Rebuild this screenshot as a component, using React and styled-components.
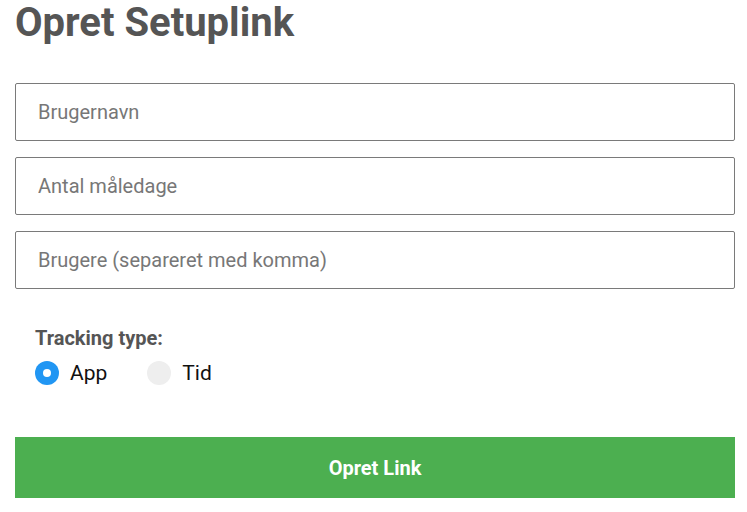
import React from "react";
import styled, { createGlobalStyle } from "styled-components";

const Global = createGlobalStyle`
  html, body { margin: 0; padding: 0; background: #fff; }
  body { font-family: Roboto, "Liberation Sans", Arial, sans-serif; }
  * { box-sizing: border-box; }
`;

const Page = styled.div`
  padding: 0 12px 0 15px;
  display: flex;
  flex-direction: column;
`;

const Title = styled.h1`
  margin: 0;
  font-size: 40px;
  line-height: 46px;
  font-weight: 700;
  color: #555;
`;

const Form = styled.form`
  display: flex;
  flex-direction: column;
  gap: 16px;
  margin-top: 37px;
`;

const Input = styled.input`
  width: 100%;
  height: 58px;
  border: 1px solid #7a7a7a;
  border-radius: 2px;
  padding: 0 22px;
  font-family: Roboto, "Liberation Sans", Arial, sans-serif;
  font-size: 20px;
  color: #333;
  outline: none;
  &::placeholder { color: #777; }
`;

const Fieldset = styled.div`
  display: flex;
  flex-direction: column;
  padding: 37px 20px 0;
  gap: 9px;
`;

const Legend = styled.div`
  font-size: 20px;
  font-weight: 700;
  color: #555;
  line-height: 24px;
`;

const Options = styled.div`
  display: flex;
  align-items: center;
  gap: 40px;
`;

const Option = styled.label`
  display: flex;
  align-items: center;
  gap: 11px;
  font-size: 21px;
  color: #111;
  line-height: 28px;
`;

const Dot = styled.span`
  width: 24px;
  height: 24px;
  border-radius: 50%;
  background: ${(p) => (p.$checked ? "#2196F3" : "#eee")};
  display: flex;
  align-items: center;
  justify-content: center;
  &::after {
    content: "";
    width: 8px;
    height: 8px;
    border-radius: 50%;
    background: #fff;
    display: ${(p) => (p.$checked ? "block" : "none")};
  }
`;

const Button = styled.button`
  margin-top: 50px;
  width: 100%;
  height: 61px;
  border: none;
  background: #4caf50;
  color: #fff;
  font-family: Roboto, "Liberation Sans", Arial, sans-serif;
  font-size: 20px;
  font-weight: 700;
`;

export default function App() {
  return (
    <>
      <Global />
      <Page>
        <Title>Opret Setuplink</Title>
        <Form onSubmit={(e) => e.preventDefault()}>
          <Input placeholder="Brugernavn" />
          <Input placeholder="Antal måledage" />
          <Input placeholder="Brugere (separeret med komma)" />
        </Form>
        <Fieldset>
          <Legend>Tracking type:</Legend>
          <Options>
            <Option><Dot $checked />App</Option>
            <Option><Dot />Tid</Option>
          </Options>
        </Fieldset>
        <Button>Opret Link</Button>
      </Page>
    </>
  );
}
